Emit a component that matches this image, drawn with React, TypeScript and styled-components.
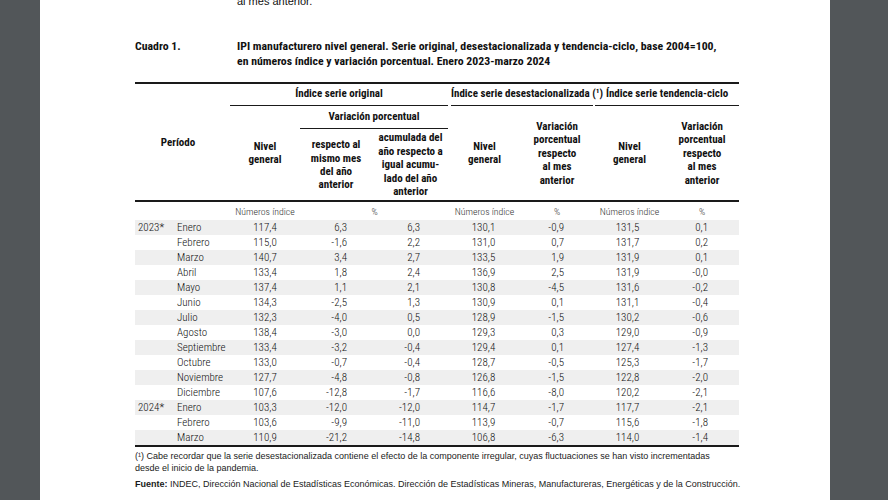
import React from 'react';
import styled, { createGlobalStyle } from 'styled-components';

const Global = createGlobalStyle`
  html, body { margin: 0; padding: 0; }
  body { background: #525659; overflow: hidden; }
`;

const COND = `"Roboto Condensed", "Liberation Sans Narrow", "DejaVu Sans Condensed", sans-serif`;
const SANS = `"Liberation Sans", Arial, sans-serif`;

const Viewer = styled.div`
  width: 888px;
  height: 500px;
  display: flex;
  overflow: hidden;
`;

const Page = styled.div`
  margin-left: 40px;
  width: 790px;
  height: 500px;
  background: #fff;
  padding-left: 95px;
  box-sizing: border-box;
  color: #111;
  overflow: hidden;
`;

const Content = styled.div`
  width: 604px;
  display: flex;
  flex-direction: column;
`;

const Lead = styled.p`
  margin: -6px 0 0 102px;
  font-family: ${SANS};
  font-size: 11px;
  line-height: 14px;
`;

const Caption = styled.div`
  display: flex;
  margin-top: 31px;
  font-family: ${COND};
  font-weight: bold;
  font-size: 11.8px;
  line-height: 15px;
  white-space: nowrap;
`;

const CaptionLabel = styled.div`
  width: 102px;
  flex: none;
`;

const CaptionText = styled.div`
  flex: 1;
`;

const Table = styled.table`
  margin-top: 13px;
  width: 604px;
  border-collapse: collapse;
  table-layout: fixed;
  font-family: ${COND};
  font-size: 11px;
  border-top: 2px solid #1a1a1a;
  border-bottom: 2px solid #1a1a1a;
`;

const Th = styled.th<{ $rule?: boolean; $h?: number; $pr?: number }>`
  font-weight: bold;
  text-align: center;
  vertical-align: middle;
  line-height: 13.4px;
  padding: 0 ${(p) => p.$pr ?? 0}px 0 0;
  height: ${(p) => (p.$h ? `${p.$h}px` : 'auto')};
  border-bottom: ${(p) => (p.$rule ? '2px solid #1a1a1a' : 'none')};
  white-space: nowrap;
`;

const GroupTitle = styled.div<{ $ml?: number; $mr?: number }>`
  margin: 0 ${(p) => p.$mr ?? 0}px 0 ${(p) => p.$ml ?? 0}px;
  padding: 3px 0 5px;
  border-bottom: 1px solid #1a1a1a;
  white-space: nowrap;
`;

const Unit = styled.td`
  height: 18px;
  padding: 0;
  text-align: center;
  vertical-align: middle;
  font-size: 9.8px;
  font-weight: 300;
  color: #333;
  white-space: nowrap;
`;

const Row = styled.tr<{ $shade: boolean }>`
  background: ${(p) => (p.$shade ? '#efefef' : 'transparent')};
`;

const Td = styled.td<{ $align: 'left' | 'center' | 'right'; $pl?: number; $pr?: number }>`
  height: 15px;
  line-height: 15px;
  padding: 0 ${(p) => p.$pr ?? 0}px 0 ${(p) => p.$pl ?? 0}px;
  text-align: ${(p) => p.$align};
  white-space: nowrap;
  font-weight: 300;
  color: #111;
`;

const Notes = styled.div`
  margin-top: 3px;
  font-family: ${SANS};
  font-size: 9px;
  line-height: 12px;
  color: #1a1a1a;
  white-space: nowrap;
`;

const Note = styled.p<{ $mt?: number }>`
  margin: ${(p) => p.$mt ?? 0}px 0 0;
`;

const data: string[][] = [
  ['2023*', 'Enero', '117,4', '6,3', '6,3', '130,1', '-0,9', '131,5', '0,1'],
  ['', 'Febrero', '115,0', '-1,6', '2,2', '131,0', '0,7', '131,7', '0,2'],
  ['', 'Marzo', '140,7', '3,4', '2,7', '133,5', '1,9', '131,9', '0,1'],
  ['', 'Abril', '133,4', '1,8', '2,4', '136,9', '2,5', '131,9', '-0,0'],
  ['', 'Mayo', '137,4', '1,1', '2,1', '130,8', '-4,5', '131,6', '-0,2'],
  ['', 'Junio', '134,3', '-2,5', '1,3', '130,9', '0,1', '131,1', '-0,4'],
  ['', 'Julio', '132,3', '-4,0', '0,5', '128,9', '-1,5', '130,2', '-0,6'],
  ['', 'Agosto', '138,4', '-3,0', '0,0', '129,3', '0,3', '129,0', '-0,9'],
  ['', 'Septiembre', '133,4', '-3,2', '-0,4', '129,4', '0,1', '127,4', '-1,3'],
  ['', 'Octubre', '133,0', '-0,7', '-0,4', '128,7', '-0,5', '125,3', '-1,7'],
  ['', 'Noviembre', '127,7', '-4,8', '-0,8', '126,8', '-1,5', '122,8', '-2,0'],
  ['', 'Diciembre', '107,6', '-12,8', '-1,7', '116,6', '-8,0', '120,2', '-2,1'],
  ['2024*', 'Enero', '103,3', '-12,0', '-12,0', '114,7', '-1,7', '117,7', '-2,1'],
  ['', 'Febrero', '103,6', '-9,9', '-11,0', '113,9', '-0,7', '115,6', '-1,8'],
  ['', 'Marzo', '110,9', '-21,2', '-14,8', '106,8', '-6,3', '114,0', '-1,4'],
];

// column layout: [align, padLeft, padRight]
const cols: Array<['left' | 'center' | 'right', number, number]> = [
  ['left', 3, 0],
  ['left', 7, 0],
  ['center', 0, 0],
  ['right', 0, 25],
  ['right', 0, 29],
  ['center', 0, 2],
  ['right', 0, 30],
  ['center', 0, 4],
  ['right', 0, 31],
];

const widths = [35, 60, 70, 72, 77, 71, 74, 71, 74];

export default function App() {
  return (
    <Viewer>
      <Global />
      <Page>
        <Content>
          <Lead>al mes anterior.</Lead>
          <Caption>
            <CaptionLabel>Cuadro 1.</CaptionLabel>
            <CaptionText>
              IPI manufacturero nivel general. Serie original, desestacionalizada y tendencia-ciclo, base 2004=100,
              <br />
              en números índice y variación porcentual. Enero 2023-marzo 2024
            </CaptionText>
          </Caption>
          <Table>
            <colgroup>
              {widths.map((w, i) => (
                <col key={i} style={{ width: w }} />
              ))}
            </colgroup>
            <thead>
              <tr>
                <Th rowSpan={3} colSpan={2} $rule $pr={9}>
                  Período
                </Th>
                <Th colSpan={3} $h={22}>
                  <GroupTitle $mr={1}>Índice serie original</GroupTitle>
                </Th>
                <Th colSpan={2} $h={22}>
                  <GroupTitle $ml={2} $mr={1}>Índice serie desestacionalizada (¹)</GroupTitle>
                </Th>
                <Th colSpan={2} $h={22}>
                  <GroupTitle $ml={1}>Índice serie tendencia-ciclo</GroupTitle>
                </Th>
              </tr>
              <tr>
                <Th rowSpan={2} $rule>
                  Nivel
                  <br />
                  general
                </Th>
                <Th colSpan={2} $h={23}>
                  <GroupTitle $mr={1}>Variación porcentual</GroupTitle>
                </Th>
                <Th rowSpan={2} $rule>
                  Nivel
                  <br />
                  general
                </Th>
                <Th rowSpan={2} $rule>
                  Variación
                  <br />
                  porcentual
                  <br />
                  respecto
                  <br />
                  al mes
                  <br />
                  anterior
                </Th>
                <Th rowSpan={2} $rule>
                  Nivel
                  <br />
                  general
                </Th>
                <Th rowSpan={2} $rule>
                  Variación
                  <br />
                  porcentual
                  <br />
                  respecto
                  <br />
                  al mes
                  <br />
                  anterior
                </Th>
              </tr>
              <tr>
                <Th $rule $h={71}>
                  respecto al
                  <br />
                  mismo mes
                  <br />
                  del año
                  <br />
                  anterior
                </Th>
                <Th $rule $h={71}>
                  acumulada del
                  <br />
                  año respecto a
                  <br />
                  igual acumu-
                  <br />
                  lado del año
                  <br />
                  anterior
                </Th>
              </tr>
            </thead>
            <tbody>
              <tr>
                <Unit />
                <Unit />
                <Unit>Números índice</Unit>
                <Unit colSpan={2}>%</Unit>
                <Unit>Números índice</Unit>
                <Unit>%</Unit>
                <Unit>Números índice</Unit>
                <Unit>%</Unit>
              </tr>
              {data.map((r, i) => (
                <Row key={i} $shade={i % 2 === 0}>
                  {r.map((v, j) => (
                    <Td key={j} $align={cols[j][0]} $pl={cols[j][1]} $pr={cols[j][2]}>
                      {v}
                    </Td>
                  ))}
                </Row>
              ))}
            </tbody>
          </Table>
          <Notes>
            <Note>
              (¹) Cabe recordar que la serie desestacionalizada contiene el efecto de la componente irregular, cuyas fluctuaciones se han visto incrementadas
              <br />
              desde el inicio de la pandemia.
            </Note>
            <Note $mt={4}>
              <b>Fuente:</b> INDEC, Dirección Nacional de Estadísticas Económicas. Dirección de Estadísticas Mineras, Manufactureras, Energéticas y de la Construcción.
            </Note>
          </Notes>
        </Content>
      </Page>
    </Viewer>
  );
}
